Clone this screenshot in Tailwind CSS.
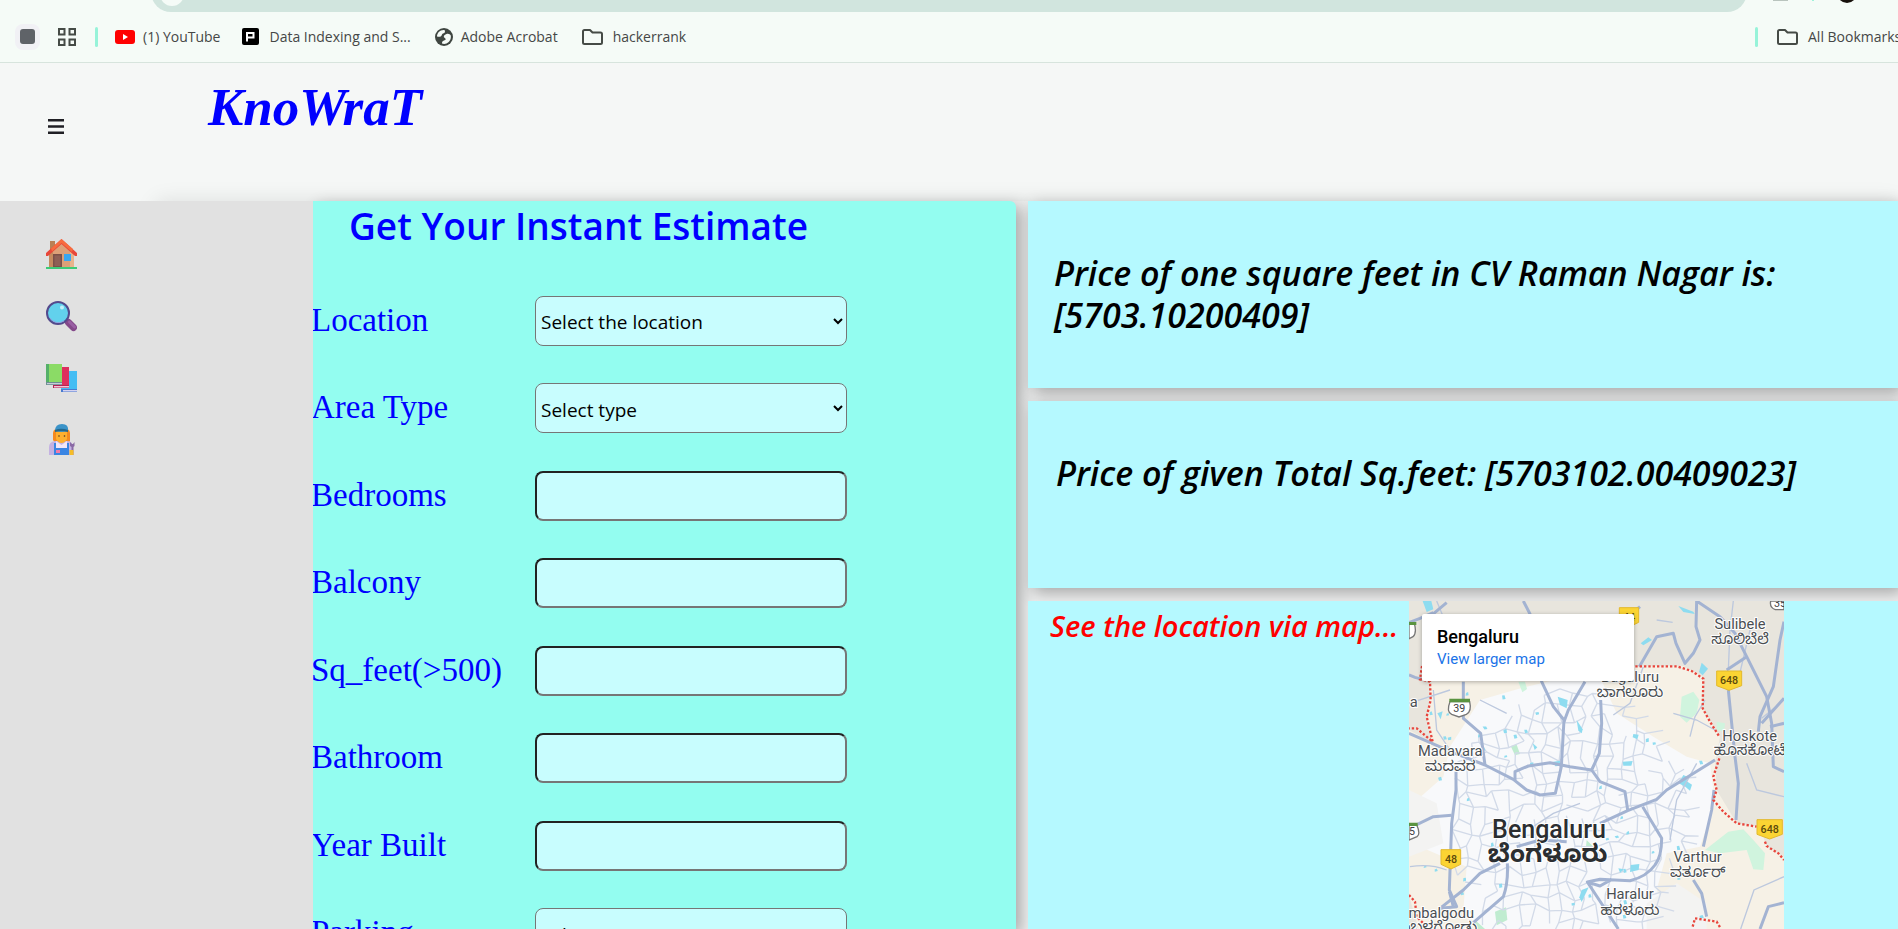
<!DOCTYPE html>
<html lang="en">
<head>
<meta charset="utf-8">
<meta name="viewport" content="width=device-width, initial-scale=1">
<title>KnoWraT</title>
<script src="https://cdn.jsdelivr.net/npm/@tailwindcss/browser@4"></script>
</head>
<body class="flex h-screen flex-col overflow-hidden bg-[#f5f7f6] font-['Open_Sans','Noto_Sans',sans-serif] text-black">

<!-- Browser toolbar, lower edge -->
<div class="flex h-3 shrink-0 items-end overflow-hidden bg-[#f5fbf7]">
  <div class="ml-[151px] flex h-10 flex-1 items-end rounded-full bg-[#d1e5de] pb-[6px] pl-[9px]">
    <div class="size-6 rounded-full bg-[#f5fbf7]"></div>
  </div>
  <svg class="h-3 w-[151px]" viewBox="0 0 151 12" aria-hidden="true">
    <rect x="26" y="0" width="15" height="1" fill="#b9c4be"/>
    <rect x="65" y="0" width="2" height="1" fill="#9ff3da"/>
    <circle cx="100" cy="-7" r="10" fill="#17110c"/>
  </svg>
</div>

<!-- Bookmarks bar -->
<nav class="flex h-[51px] shrink-0 items-center overflow-hidden border-b border-[#d7e4dd] bg-[#f5fbf7] pb-px text-[14px] leading-5 whitespace-nowrap text-[#454746]" aria-label="Bookmarks">
  <button class="ml-[15px] flex h-[26px] w-[25px] items-center justify-center rounded-lg bg-[#f1f1f5]" aria-label="Tab group"><span class="size-[15px] rounded-[3px] bg-[#5f6368]"></span></button>
  <button class="ml-[18px]" aria-label="Apps">
    <svg class="size-[18px]" viewBox="0 0 18 18" fill="none" stroke="#454b46" stroke-width="2"><path d="M1 1h5.500v5.500H1zM11.500 1H17v5.500h-5.500zM1 11.500h5.500V17H1zM11.500 11.500H17V17h-5.500z"/></svg>
  </button>
  <span class="ml-[19px] h-5 w-[3px] rounded-full bg-[#97f3d9]"></span>
  <a href="#" class="ml-[17px] flex items-center gap-2">
    <svg class="h-[14px] w-5" viewBox="0 0 20 14"><rect width="20" height="14" rx="3" fill="#f00"/><path d="M8 4v6l5-3z" fill="#fff"/></svg>
    (1) YouTube
  </a>
  <a href="#" class="ml-[22px] flex items-center gap-[10px]">
    <svg class="size-[17px]" viewBox="0 0 17 17"><rect width="17" height="17" rx="2" fill="#000"/><path d="M5 13.500V5h6.500v4.500H5" fill="none" stroke="#fff" stroke-width="2"/></svg>
    Data Indexing and S...
  </a>
  <a href="#" class="ml-6 flex items-center gap-2">
    <svg class="size-[18px]" viewBox="0 0 18 18"><circle cx="9" cy="9" r="9" fill="#3f4641"/><path d="M9.500 2C5 1.500 2 5 2 8.500c1.500.5 3 .5 4-.2 1.200-.8.6-2.300 2-2.800 2-.5 2.500-1.500 1.500-3.500zM11.500 6c2-.8 3.500.3 4.300 1.500.5 3-.8 6.500-4.300 8-1.500.6-3.500.5-4.500 0 0-2 .5-2.500 2-3 2-.5 2.200-1.800.8-2.600-1.500-.6-1.400-3 1.700-3.900z" fill="#f5fbf7"/></svg>
    Adobe Acrobat
  </a>
  <a href="#" class="ml-6 flex items-center gap-[10px]">
    <svg class="h-4 w-[21px]" viewBox="0 0 21 16" fill="none" stroke="#454b46" stroke-width="2" stroke-linejoin="round"><path d="M1 2.500Q1 1 2.500 1H8l2.500 2.500h8Q20 3.500 20 5v8.500q0 1.500-1.500 1.500h-16Q1 15 1 13.500z"/></svg>
    hackerrank
  </a>
  <div class="ml-auto flex w-[143px] items-center">
    <span class="h-5 w-[3px] shrink-0 rounded-full bg-[#97f3d9]"></span>
    <a href="#" class="ml-[19px] flex items-center gap-[10px]">
      <svg class="h-4 w-[21px] shrink-0" viewBox="0 0 21 16" fill="none" stroke="#454b46" stroke-width="2" stroke-linejoin="round"><path d="M1 2.500Q1 1 2.500 1H8l2.500 2.500h8Q20 3.500 20 5v8.500q0 1.500-1.500 1.500h-16Q1 15 1 13.500z"/></svg>
      All Bookmarks
    </a>
  </div>
</nav>

<!-- Site header -->
<header class="flex h-[138px] shrink-0 items-start bg-[#f5f7f6]">
  <button class="mt-14 ml-12" aria-label="Toggle menu">
    <svg class="h-[15px] w-4" viewBox="0 0 16 15" fill="#1f1f24"><path d="M0 0h16v2.500H0zM0 6.200h16v2.500H0zM0 12.500h16V15H0z"/></svg>
  </button>
  <h1 class="mt-[14px] ml-36 font-['Liberation_Serif',serif] text-[53px] leading-[60px] font-bold text-[#0000ff] italic">KnoWraT</h1>
</header>

<main class="relative min-h-0 flex-1">
  <!-- Side menu, laid over the content's left part -->
  <aside class="absolute inset-y-0 left-0 z-10 w-[313px] bg-[#e1e1e1] pt-[37px] pl-[45px]">
    <ul class="flex flex-col gap-[30px]">
      <li><a href="#" aria-label="Home" class="block size-8">
        <svg viewBox="0 0 32 32"><path d="M5 3h5v9l-5 4z" fill="#b98055"/><path d="M4 15 16.500 4 29 15v14H4z" fill="#dda077"/><path d="M4 15 8 12v17H4z" fill="#c58a5e"/><path d="m25 12 4 3v14h-4z" fill="#e8b48c"/><path d="M16.500 1 1 15v3h2L16.500 6 30 18h2v-3z" fill="#e8473a"/><path d="M16.500 1 6 10.500l1 3L16.500 5 27 14l1-3z" fill="#f76b3e"/><path d="M8 16h9v13H8z" fill="#7c5048"/><path d="M9.500 17.500h6V28h-6z" fill="#8e5f55"/><path d="M19 16h7v7h-7z" fill="#3aa7ef"/><path d="M1 29h31v2H1z" fill="#3ccb77"/></svg>
      </a></li>
      <li><a href="#" aria-label="Search" class="block size-8">
        <svg viewBox="0 0 32 32"><path d="m19 19 4 4" stroke="#5b4a86" stroke-width="3"/><path d="m23.500 22.500 5 5" stroke="#84498a" stroke-width="7" stroke-linecap="round"/><path d="m24.500 22 5 5" stroke="#9a5fa4" stroke-width="3" stroke-linecap="round"/><circle cx="13" cy="13" r="11" fill="#62d1ec" stroke="#544a8c" stroke-width="2"/><path d="M5 18a10 10 0 0 0 14 3" fill="none" stroke="#8fa2e0" stroke-width="1"/><circle cx="17" cy="7.500" r="2" fill="#c2f0fa"/></svg>
      </a></li>
      <li><a href="#" aria-label="Library" class="block size-8">
        <svg viewBox="0 0 32 32"><path d="M16 9h16v18H16z" fill="#45bdf3"/><path d="M16 27h16v3H16z" fill="#4a7bd0"/><path d="M18 28h14v1.500H18z" fill="#d5d3f0"/><path d="M8 5h16v18H8z" fill="#dd2f5d"/><path d="M8 23h16v3H8z" fill="#b32352"/><path d="M9 24h15v1.500H9z" fill="#f3c3d8"/><path d="M1 2h16v18H1z" fill="#8bdb66"/><path d="M1 2h3v19H1z" fill="#55b069"/><path d="M1 20h16v3H1z" fill="#6d8f92"/><path d="M2 21h15v1.200H2z" fill="#c8cbd8"/></svg>
      </a></li>
      <li><a href="#" aria-label="About" class="block size-8">
        <svg viewBox="0 0 32 32"><path d="M8 9q0-5 8.500-5T25 9v8q-2 3-8.500 3T8 16z" fill="#f58a1f"/><path d="M4 31V23q0-5 6-6h13q5 1 5 6v8z" fill="#c4b2e2"/><path d="M11 8h11v7q-2 4-5.500 4T11 15z" fill="#ffb02e"/><path d="M10 7q0-7 7-7t6 7q-6.500 2-13 0z" fill="#3b93c8"/><path d="M10 6q6-2.500 13 0v2q-6.500-2-13 0z" fill="#23688f"/><circle cx="14" cy="12" r=".8" fill="#4b3528"/><circle cx="19.500" cy="12" r=".8" fill="#4b3528"/><path d="M11 17l5.500 4 5.500-4v8H11z" fill="#f3e6f7"/><path d="M9 31V19h2v5h11v-5h2v12z" fill="#3a85e3"/><path d="M11 26h4v3h-4z" fill="#f07ca8"/><path d="M25 18v4l1.500 1v8h2v-8l1-1v-4l-1.500 2h-1z" fill="#8a6aa5"/><path d="M24.500 26h4v5h-4z" fill="#f6bd28"/></svg>
      </a></li>
    </ul>
  </aside>

  <div class="ml-[156px] flex h-full gap-3 bg-[#eeefef] pl-[157px] shadow-[0_0_20px_rgba(0,0,0,0.1)]">
    <!-- Estimate form -->
    <form class="flex-[703] overflow-hidden rounded-tr-md bg-[#93fdf0] shadow-[5px_5px_15px_rgba(0,0,0,0.3)]">
      <h2 class="flex h-[76px] items-start pl-9 text-[37px] leading-[50px] font-semibold text-[#0000ff]">Get Your Instant Estimate</h2>
      <div class="-ml-[2px] grid h-[700px] grid-rows-8 items-center font-['Liberation_Serif',serif] text-[33px] leading-9 text-[#0000ff]">
        <div class="flex items-center">
          <label for="loc" class="w-[224px] pb-[2px]">Location</label>
          <select id="loc" class="h-[50px] w-[312px] rounded-lg border border-[#767676] bg-[#c8fdfe] px-[1px] pt-[3px] font-['Open_Sans',sans-serif] text-[19px] text-black"><option>Select the location</option></select>
        </div>
        <div class="flex items-center">
          <label for="area" class="w-[224px] pb-[2px]">Area Type</label>
          <select id="area" class="h-[50px] w-[312px] rounded-lg border border-[#767676] bg-[#c8fdfe] px-[1px] pt-[3px] font-['Open_Sans',sans-serif] text-[19px] text-black"><option>Select type</option></select>
        </div>
        <div class="flex items-center">
          <label for="bed" class="w-[224px] pb-[2px]">Bedrooms</label>
          <input id="bed" class="h-[50px] w-[312px] rounded-lg border-2 border-t-[#222] border-r-[#767676] border-b-[#767676] border-l-[#222] bg-[#c8fdfe] px-2 text-xl text-black">
        </div>
        <div class="flex items-center">
          <label for="balc" class="w-[224px] pb-[2px]">Balcony</label>
          <input id="balc" class="h-[50px] w-[312px] rounded-lg border-2 border-t-[#222] border-r-[#767676] border-b-[#767676] border-l-[#222] bg-[#c8fdfe] px-2 text-xl text-black">
        </div>
        <div class="flex items-center">
          <label for="sqft" class="w-[224px] pb-[2px]">Sq_feet(&gt;500)</label>
          <input id="sqft" class="h-[50px] w-[312px] rounded-lg border-2 border-t-[#222] border-r-[#767676] border-b-[#767676] border-l-[#222] bg-[#c8fdfe] px-2 text-xl text-black">
        </div>
        <div class="flex items-center">
          <label for="bath" class="w-[224px] pb-[2px]">Bathroom</label>
          <input id="bath" class="h-[50px] w-[312px] rounded-lg border-2 border-t-[#222] border-r-[#767676] border-b-[#767676] border-l-[#222] bg-[#c8fdfe] px-2 text-xl text-black">
        </div>
        <div class="flex items-center">
          <label for="year" class="w-[224px] pb-[2px]">Year Built</label>
          <input id="year" class="h-[50px] w-[312px] rounded-lg border-2 border-t-[#222] border-r-[#767676] border-b-[#767676] border-l-[#222] bg-[#c8fdfe] px-2 text-xl text-black">
        </div>
        <div class="flex items-center">
          <label for="park" class="w-[224px] pb-[2px]">Parking</label>
          <select id="park" class="h-[50px] w-[312px] rounded-lg border border-[#767676] bg-[#c8fdfe] px-[1px] pt-[3px] font-['Open_Sans',sans-serif] text-[19px] text-black"><option>Select</option></select>
        </div>
      </div>
    </form>

    <!-- Results -->
    <div class="flex min-w-0 flex-[870] flex-col gap-[13px]">
      <section class="h-[187px] shrink-0 bg-[#b5f9ff] pt-[51px] pr-[60px] pl-[26px] shadow-[5px_5px_15px_rgba(0,0,0,0.3)]">
        <h3 class="text-[34px] leading-[42px] font-semibold italic">Price of one square feet in CV Raman Nagar is: [5703.10200409]</h3>
      </section>
      <section class="h-[187px] shrink-0 bg-[#b5f9ff] pt-[51px] pl-[28px] shadow-[5px_5px_15px_rgba(0,0,0,0.3)]">
        <h3 class="text-[34px] leading-[42px] font-semibold italic">Price of given Total Sq.feet: [5703102.00409023]</h3>
      </section>
      <section class="flex min-h-0 flex-1 items-start overflow-hidden bg-[#b5f9ff] pl-[22px]">
        <h3 class="w-[359px] shrink-0 pt-1 text-[29px] leading-[42px] font-semibold whitespace-nowrap text-[#ff0000] italic">See the location via map...</h3>
        <div class="relative w-[375px] shrink-0">
          <svg id="map" class="block h-[328px] w-[375px]" viewBox="27 33 1125 984" role="img" aria-label="Map of Bengaluru">
            <rect x="27" y="33" width="1125" height="984" fill="#e8e5dd"/>
            <path d="M60 228H850L912 262 905 350 960 440 945 520 950 600 1010 700 1080 710 1100 770 1152 800V1017H55L27 915V420L98 458 82 400 92 280z" fill="#f6f1e6"/>
            <path id="city" d="M240 330 380 290 590 240 650 370 760 440 860 500 930 520 945 640 900 770 800 790 770 900 830 1017H240L190 960 200 830 60 770 40 640 130 560 150 470z" fill="#f8f9fb"/>
            <path d="M27 600 110 640 130 760 27 800zM740 940l90-60 90 60v77H740z" fill="#f3f3f2"/>
            <g fill="#d0f4de"><path d="M845 320 880 305 898 330 890 370 860 398 840 380z"/><path d="M915 780 985 725 1030 718 1060 750 1095 790 1090 840 1060 838 1040 780 960 790z"/><path d="M950 395 975 400 972 425 950 420z"/><path d="M355 275h20l6 22-14 10z"/></g>
            <g fill="#c0ecd0"><path d="M285 965 318 952 322 990 290 1006z"/><path d="M332 468 350 464 360 492 345 496z"/><path d="M560 750 580 770 570 785 558 770z"/><path d="M225 990l30 27h-30z"/></g>
            <g id="mesh" fill="none" stroke="#d2dae8" stroke-width="4"></g>
            <g fill="#8edcf0"><path d="M68 33h26l6 25-20 8z"/><path d="M835 48 880 65 884 72 850 66z"/><path d="M722 160 745 142 756 150 730 166z"/><path d="M905 218 924 236 908 256 897 246z"/><path d="M473 320 503 330 500 355 480 345z"/><path d="M530 390 548 418 545 430 535 422z"/><path d="M668 515 698 513 694 527 670 527z"/><path d="M700 432 716 434 712 448 698 442z"/><path d="M836 580 850 555 862 560 860 574 876 584 870 602 856 590z"/><path d="M692 825 718 822 716 840 690 846z"/><path d="M545 900 566 892 545 936 538 922z"/><path d="M655 835 672 838 660 848z"/><path d="M398 460l14 12-8 8z"/><path d="M460 515l20-3 2 15-16 2z"/><path d="M112 370l16-6-6 24z"/></g>
            <g id="ponds" fill="#8edcf0"></g>
            <g fill="none" stroke="#bcc8de" stroke-width="4"><path d="M985 240 990 120 1000 33M1152 330 1085 385M27 340 150 300M640 375 690 340 730 230M770 90 818 97M100 300 110 420 150 480M820 370l70 20 55 30M1152 860l-90 40-40 117M30 830q60-10 110 10M110 33l25 60M1050 120l-40 170M890 520l-60 110-20 120M1040 520l30 80 82 20M540 640l-80 30-60 40M240 330l80 40M870 440l15-60 30-50"/></g>
            <g fill="none" stroke="#a3b3d2" stroke-width="9" stroke-linejoin="round">
              <path d="M370 33 390 72 425 275 460 350 492 390 488 460 484 530 466 610 420 615 380 600 340 568 255 525 165 490 27 430"/>
              <path d="M555 275 505 360 492 395M602 330 605 400 598 490 575 540 600 575 675 605 683 660"/>
              <path d="M345 570V545L385 528 450 518 510 530 575 540"/>
              <path d="M600 700 683 662 770 628 800 600 945 510M728 650 785 745Q785 800 765 825 740 860 690 872L600 868 562 876 655 1017M562 876 600 888 635 868"/>
              <path d="M190 275V385L242 430 255 525"/><path d="M168 545 168 600 155 700 148 900 170 950 120 955"/><path d="M27 715 100 680 155 676"/>
              <path d="M322 820Q325 880 310 920L220 998M120 955 190 900 240 850 300 820M350 770 420 750 500 755M148 905 160 950"/>
              <path d="M27 255 45 262 66 268M90 80 140 38M720 50 690 75M27 98 60 85 100 68"/>
              <path d="M718 230 770 140 820 130 828 160 855 220 880 190 900 150 888 110 890 33 960 80 1005 130 1040 200 1100 320 1115 400 1120 530 1152 545"/>
              <path d="M1152 95 1140 150 1120 290 1080 380 1075 425M985 300 990 350 1005 500 1015 580 1008 690M1040 200 980 240M1152 325 1085 400M1152 400 1110 410"/>
              <path d="M942 600 935 660 910 770M880 870 905 910 920 980M1152 938 1105 950 1080 1017"/>
            </g>
            <g fill="none" stroke="#e8453c" stroke-width="7" stroke-dasharray="7 6">
              <path d="M706 229H830L875 243 910 266 908 355 930 395 958 440M958 505 940 560 950 600 940 630 970 665 1010 700 1070 710M1095 755 1100 768 1135 790 1152 810M66 228 60 268 90 275 92 330 80 380 98 455 50 415H27M27 915 45 935 50 980 70 1000M878 1010 885 985 950 995 960 1012"/>
            </g>
            <g stroke-width="3" fill="#fbd433" stroke="#e3b92c" stroke-linejoin="round">
              <path d="M950 243h75v44l-38 14-37-14z"/>
              <path d="M1071 689h76v44l-38 14-38-14z"/>
              <path d="M123 779h59v44l-29 14-30-14z"/>
              <path d="M658 53h58v44l-29 14-29-14z"/>
            </g>
            <g fill="#fff" stroke="#777" stroke-width="4">
              <path d="M150 335q-12 30 5 38l22 8 22-8q17-8 10-38z"/><path d="M27 702h22q14 30 2 38l-24 10zM27 100h16q8 30-4 40l-12 6zM1112 33q-4 20 14 26h26V33z"/>
            </g>
            <path d="M148 326h62v11h-62zM27 698h26v10H27zM27 96h22v9H27z" fill="#5a9440"/>
            <g font-family="Roboto, sans-serif" font-size="32" text-anchor="middle" fill="#3c4043">
              <text x="987" y="283" font-weight="500" fill="#5c4a0c">648</text><text x="1109" y="729" font-weight="500" fill="#5c4a0c">648</text><text x="153" y="820" font-weight="500" fill="#5c4a0c">48</text><text x="687" y="92" font-weight="500" fill="#5c4a0c">44</text>
              <text x="178" y="366">39</text><text x="36" y="735">5</text><text x="1140" y="50">35</text>
            </g>
            <g font-family="Roboto, 'Noto Sans Kannada', 'Noto Sans', sans-serif" font-size="44" text-anchor="middle" fill="#4a4e52" stroke="#fff" stroke-width="6" paint-order="stroke" stroke-linejoin="round">
              <text x="1020" y="118">Sulibele</text><text x="1020" y="162" font-size="45">ಸೂಲಿಬೆಲೆ</text>
              <text x="690" y="276">Bagaluru</text><text x="690" y="320" font-size="45">ಬಾಗಲೂರು</text>
              <text x="1049" y="452">Hoskote</text><text x="1049" y="496" font-size="45">ಹೊಸಕೋಟೆ</text>
              <text x="151" y="499">Madavara</text><text x="151" y="543" font-size="45">ಮದವರ</text>
              <text x="893" y="817">Varthur</text><text x="893" y="862" font-size="45">ವರ್ತೂರ್</text>
              <text x="690" y="928">Haralur</text><text x="690" y="974" font-size="45">ಹರಳೂರು</text>
              <text x="98" y="984">Kumbalgodu</text><text x="98" y="1026" font-size="45">ಕುಂಬಳಗೋಡು</text>
              <text x="41" y="352">a</text>
              <text x="447" y="745" font-size="75" font-weight="500" fill="#2b2e31">Bengaluru</text>
              <text x="443" y="817" font-size="74" font-weight="700" fill="#2b2e31">ಬೆಂಗಳೂರು</text>
            </g>
          </svg>
          <!-- Place card over the map -->
          <div class="absolute top-[13px] left-[13px] h-[67px] w-[212px] rounded-[2px] bg-white pt-[12px] pl-[15px] font-['Roboto',sans-serif] shadow-[0_1px_4px_rgba(0,0,0,0.3)]">
            <div class="text-[18px] leading-[22px] font-medium">Bengaluru</div>
            <a href="#" class="block text-[15px] leading-[22px] text-[#1a73e8]">View larger map</a>
          </div>
        </div>
      </section>
    </div>
  </div>
</main>

<script>
  // Minor streets (a jittered grid) and small ponds, from a fixed seed
  let seed = 7;
  const rnd = () => (seed = (seed * 16807) % 2147483647) / 2147483647;
  const pts = [];
  for (let r = 0; r < 20; r++) {
    pts.push([]);
    for (let c = 0; c < 20; c++) pts[r].push([170 + c * 38 + (rnd() - .5) * 30, 310 + r * 38 + (rnd() - .5) * 30]);
  }
  const inside = ([x, y]) => ((x - 500) / 360) ** 2 + ((y - 690) / 400) ** 2 < 1;
  let d = '';
  for (let r = 0; r < 19; r++) for (let c = 0; c < 19; c++) {
    const p = pts[r][c];
    if (!inside(p)) continue;
    if (rnd() < .8) d += `M${p}L${pts[r][c + 1]}`;
    if (rnd() < .8) d += `M${p}L${pts[r + 1][c]}`;
  }
  const ns = 'http://www.w3.org/2000/svg';
  const mesh = document.createElementNS(ns, 'path');
  mesh.setAttribute('d', d);
  document.getElementById('mesh').append(mesh);
  let w = '';
  for (let i = 0; i < 45; i++) w += `M${60 + rnd() * 860} ${290 + rnd() * 700}l${5 + rnd() * 6} ${-4 + rnd() * 4} ${rnd() * 4} ${5 + rnd() * 7} -9 2z`;
  const ponds = document.createElementNS(ns, 'path');
  ponds.setAttribute('d', w);
  document.getElementById('ponds').append(ponds);
</script>
</body>
</html>
